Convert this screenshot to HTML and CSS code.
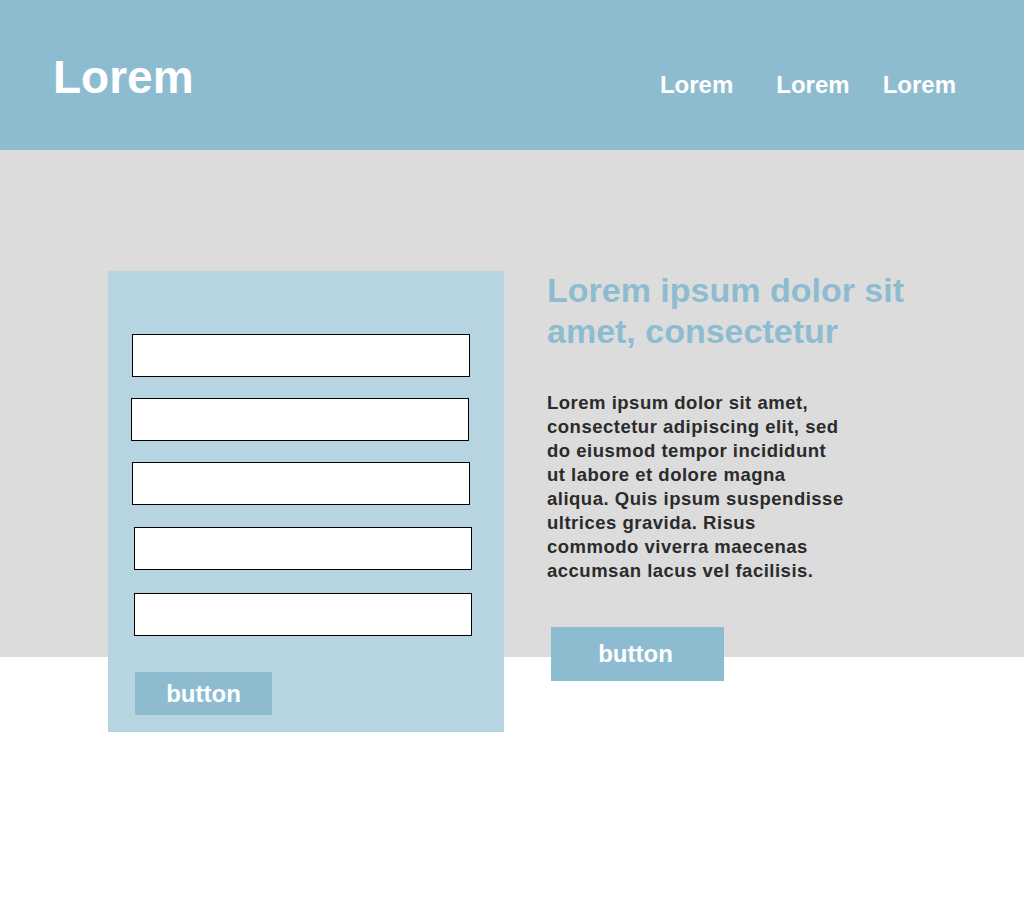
FILE: index.html
```html
<!DOCTYPE html>
<html lang="en">
<head>
<meta charset="utf-8">
<title>Lorem</title>
<link rel="stylesheet" href="styles.css">
</head>
<body>
<header class="site-header">
  <div class="logo">Lorem</div>
  <nav class="nav">
    <a class="nav-link nav-link--wide" href="#">Lorem</a>
    <a class="nav-link" href="#">Lorem</a>
    <a class="nav-link" href="#">Lorem</a>
  </nav>
</header>
<main class="hero">
  <form class="form-card">
    <input class="field" type="text">
    <input class="field field--left" type="text">
    <input class="field" type="text">
    <input class="field field--right" type="text">
    <input class="field field--right field--low" type="text">
    <button class="btn btn--form" type="button">button</button>
  </form>
  <section class="intro">
    <h1 class="intro-title">Lorem ipsum dolor sit amet, consectetur</h1>
    <p class="intro-text">Lorem ipsum dolor sit amet, consectetur adipiscing elit, sed do eiusmod tempor incididunt ut labore et dolore magna aliqua. Quis ipsum suspendisse ultrices gravida. Risus commodo viverra maecenas accumsan lacus vel facilisis.</p>
    <button class="btn btn--intro" type="button">button</button>
  </section>
</main>
</body>
</html>
```
FILE: styles.css
```css
* { box-sizing: border-box; }

html, body {
  margin: 0;
  padding: 0;
  background: #ffffff;
  font-family: "Liberation Sans", Arial, sans-serif;
  font-weight: 700;
}

.site-header {
  height: 150px;
  background: #8dbcd1;
  display: flex;
  justify-content: space-between;
  align-items: baseline;
  padding: 50px 68px 0 53px;
}

.logo {
  color: #ffffff;
  font-size: 46px;
  line-height: normal;
}

.nav {
  display: flex;
  gap: 33px;
}

.nav-link {
  color: #ffffff;
  font-size: 24px;
  text-decoration: none;
}

.nav-link--wide { margin-right: 10px; }

.hero {
  display: flex;
  align-items: flex-start;
  gap: 43px;
  padding: 120px 0 0 108px;
  min-height: 750px;
  background: linear-gradient(#dcdcdc 0, #dcdcdc 507px, #ffffff 507px);
}

.form-card {
  width: 396px;
  margin-top: 1px;
  background: #b7d5e0;
  padding: 63px 0 17px 24px;
  display: flex;
  flex-direction: column;
  align-items: flex-start;
}

.field {
  width: 338px;
  height: 43px;
  margin: 0 0 21px 0;
  border: 1px solid #000000;
  background: #ffffff;
  padding: 0;
}

.field--left { margin-left: -1px; }
.field--right { margin-left: 2px; margin-top: 1px; }
.field--low { margin-top: 2px; }

.btn {
  border: 0;
  background: #8dbcd1;
  color: #ffffff;
  font-family: "Liberation Sans", Arial, sans-serif;
  font-weight: 700;
  font-size: 24px;
  padding: 0;
  cursor: pointer;
}

.btn--form {
  width: 137px;
  height: 43px;
  margin: 15px 0 0 3px;
}

.intro {
  width: 380px;
  display: flex;
  flex-direction: column;
  align-items: flex-start;
}

.intro-title {
  margin: 0;
  color: #8dbcd1;
  font-size: 34px;
  line-height: 41px;
}

.intro-text {
  width: 302px;
  margin: 39px 0 0 0;
  color: #2b2b2b;
  font-size: 18.5px;
  line-height: 24px;
  letter-spacing: 0.5px;
}

.btn--intro {
  width: 173px;
  height: 54px;
  margin: 44px 0 0 4px;
  padding-right: 4px;
}
```
